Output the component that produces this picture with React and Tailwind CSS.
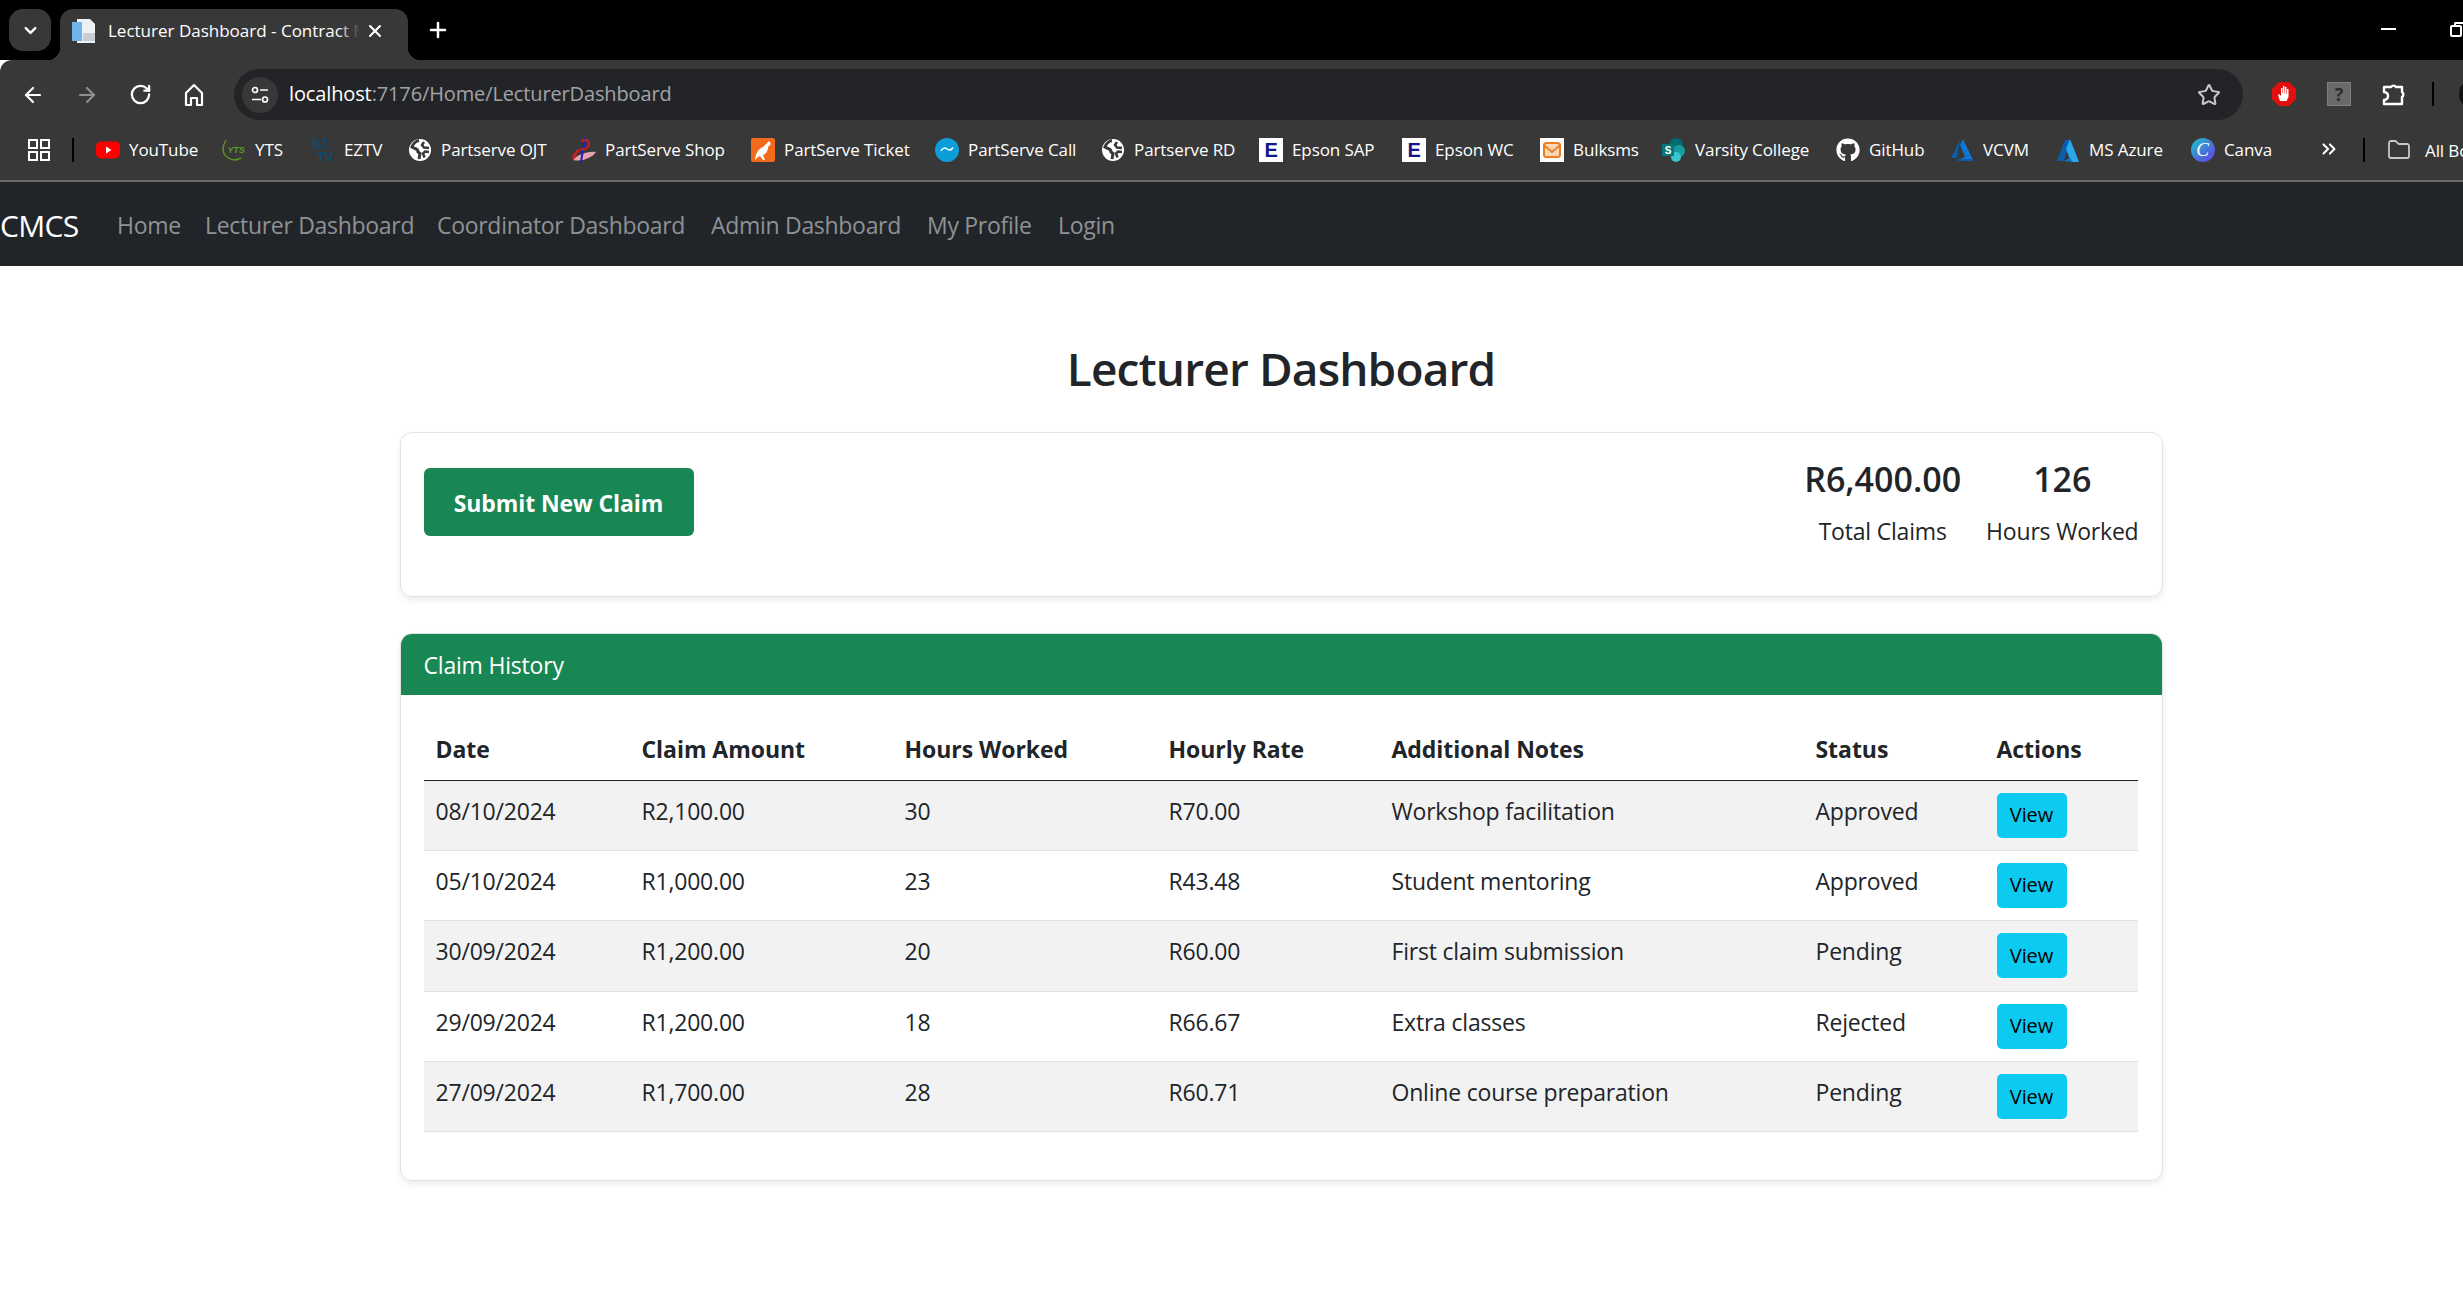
import { ArrowLeft, ArrowRight, RotateCw, Star, ChevronDown, ChevronsRight, Plus, X, Folder } from 'lucide-react';
import { FaGithub } from 'react-icons/fa';

function Globe() {
  return (
    <svg viewBox="0 0 24 24" className="w-6 h-6">
      <circle cx="12" cy="12" r="11" fill="#fff" />
      <path d="M11 2.500C8 3 5 6 4 9l3 1.500c2 .5 3 2 3 3.500l2 1.500-1 5.500" fill="none" stroke="#383838" strokeWidth="3" />
      <path d="M16 4l-2 3 2 2.500 5 .5M21 14l-4-.5-2 2 1.500 4" fill="none" stroke="#383838" strokeWidth="2.500" />
    </svg>
  );
}

function EpsonIcon() {
  return (
    <div className="w-6 h-6 bg-white flex items-center justify-center">
      <svg viewBox="0 0 24 24" className="w-6 h-6"><text x="12" y="19" textAnchor="middle" fontSize="20" fontWeight="800" fill="#10188c" fontFamily="Liberation Sans">E</text></svg>
    </div>
  );
}

const bookmarks = [
  { label: 'YouTube', width: 'w-[126px]', icon: <svg viewBox="0 0 24 24" className="w-6 h-6"><rect y="3.500" width="24" height="17" rx="5" fill="#f00" /><path d="M10 8.500l5.500 3.500-5.500 3.500z" fill="#fff" /></svg> },
  { label: 'YTS', width: 'w-[89px]', icon: <svg viewBox="0 0 24 24" className="w-6 h-6"><path d="M4 2C0 9 0 15 5 19c4 3 9 4 14 1" fill="none" stroke="#5c8f22" strokeWidth="1.500" /><text x="14" y="15" textAnchor="middle" fontSize="9" fontStyle="italic" fontWeight="700" fill="#5c9c22" fontFamily="Liberation Sans">YTS</text></svg> },
  { label: 'EZTV', width: 'w-[97px]', icon: <svg viewBox="0 0 24 24" className="w-6 h-6 overflow-visible"><text x="1" y="10" fontSize="13" fontWeight="700" fill="#0d4a70" fontFamily="Liberation Sans">EZ</text><text x="6" y="23" fontSize="13" fontWeight="700" fill="#0d4a70" fontFamily="Liberation Sans">TV</text></svg> },
  { label: 'Partserve OJT', width: 'w-[164px]', icon: <Globe /> },
  { label: 'PartServe Shop', width: 'w-[179px]', icon: <svg viewBox="0 0 24 24" className="w-6 h-6"><path d="M1 22c4-5 14-9 23-8-4 6-14 10-23 8z" fill="#e9a2ae" /><path d="M13 0L9 24" stroke="#1f1fc8" strokeWidth="2" /><path d="M9 3c5-2 9 0 8 4s-5 5-9 4" fill="none" stroke="#c2202a" strokeWidth="2" /><path d="M1 21c1-3 3-7 6-9" fill="none" stroke="#c2202a" strokeWidth="3" /></svg> },
  { label: 'PartServe Ticket', width: 'w-[184px]', icon: <svg viewBox="0 0 24 24" className="w-6 h-6"><rect width="24" height="24" rx="2" fill="#f26a1b" /><path d="M4 22c1-7 3-11 8-13l6-6 2 3-3 3c0 4-2 7-5 8l2 5h-2l-3-4-2 1z" fill="#fff" /></svg> },
  { label: 'PartServe Call', width: 'w-[166px]', icon: <svg viewBox="0 0 24 24" className="w-6 h-6"><circle cx="12" cy="12" r="12" fill="#0b9ed9" /><path d="M6 13c2-3.500 4-3.500 6-2s4 1.500 6-1.500" fill="none" stroke="#fff" strokeWidth="1.500" /></svg> },
  { label: 'Partserve RD', width: 'w-[158px]', icon: <Globe /> },
  { label: 'Epson SAP', width: 'w-[143px]', icon: <EpsonIcon /> },
  { label: 'Epson WC', width: 'w-[138px]', icon: <EpsonIcon /> },
  { label: 'Bulksms', width: 'w-[122px]', icon: <div className="w-6 h-6 bg-white flex items-center justify-center"><svg viewBox="0 0 20 20" className="w-5 h-5"><rect x="2" y="3" width="16" height="14" rx="2.500" fill="#fbd9b8" stroke="#f07c1e" strokeWidth="2" /><path d="M3 6l7 6 7-6" fill="none" stroke="#f07c1e" strokeWidth="2" /></svg></div> },
  { label: 'Varsity College', width: 'w-[174px]', icon: <svg viewBox="0 0 24 24" className="w-6 h-6"><circle cx="14" cy="7" r="7" fill="#036c70" /><circle cx="17" cy="13" r="6" fill="#1a9ba1" /><circle cx="14" cy="19" r="5" fill="#37c6d0" /><rect y="6" width="12" height="12" fill="#03787c" /><text x="6" y="16" textAnchor="middle" fontSize="10" fontWeight="700" fill="#fff" fontFamily="Liberation Sans">S</text></svg> },
  { label: 'GitHub', width: 'w-[114px]', icon: <FaGithub className="w-6 h-6 text-white" /> },
  { label: 'VCVM', width: 'w-[106px]', icon: <svg viewBox="0 0 24 24" className="w-6 h-6"><path d="M13 1l10 21H8l7-3-5-12z" fill="#1176d2" /><path d="M10 2L1 20h6z" fill="#0a5cad" /><path d="M8 22h15" stroke="#0a5cad" strokeWidth="2" /></svg> },
  { label: 'MS Azure', width: 'w-[135px]', icon: <svg viewBox="0 0 24 24" className="w-6 h-6"><path d="M9 2L1 23h7L14 2z" fill="#0a5cad" /><path d="M14 1l9 23h-8l-5-13z" fill="#29a8ea" /><path d="M8 23l6-3 3 4z" fill="#0f78d4" /></svg> },
  { label: 'Canva', width: 'w-[100px]', icon: <svg viewBox="0 0 24 24" className="w-6 h-6"><defs><linearGradient id="canva" x1="0" y1="0" x2="1" y2="1"><stop offset="0" stopColor="#19c8c8" /><stop offset="1" stopColor="#6a35e8" /></linearGradient></defs><circle cx="12" cy="12" r="12" fill="url(#canva)" /><text x="11.500" y="18" textAnchor="middle" fontSize="19" fontStyle="italic" fill="#fff" fontFamily="Liberation Serif">C</text></svg> },
];

const navLinks = [
  { label: 'Home', width: 'w-[88px]' },
  { label: 'Lecturer Dashboard', width: 'w-[232px]' },
  { label: 'Coordinator Dashboard', width: 'w-[274px]' },
  { label: 'Admin Dashboard', width: 'w-[216px]' },
  { label: 'My Profile', width: 'w-[131px]' },
  { label: 'Login', width: 'w-[80px]' },
];

const claims = [
  ['08/10/2024', 'R2,100.00', '30', 'R70.00', 'Workshop facilitation', 'Approved'],
  ['05/10/2024', 'R1,000.00', '23', 'R43.48', 'Student mentoring', 'Approved'],
  ['30/09/2024', 'R1,200.00', '20', 'R60.00', 'First claim submission', 'Pending'],
  ['29/09/2024', 'R1,200.00', '18', 'R66.67', 'Extra classes', 'Rejected'],
  ['27/09/2024', 'R1,700.00', '28', 'R60.71', 'Online course preparation', 'Pending'],
];

const headers = ['Date', 'Claim Amount', 'Hours Worked', 'Hourly Rate', 'Additional Notes', 'Status', 'Actions'];
const colWidths = ['w-[206px]', 'w-[263px]', 'w-[264px]', 'w-[223px]', 'w-[424px]', 'w-[181px]', 'w-[153px]'];

function BrowserChrome() {
  return (
    <div className="text-white">
      {/* tab strip */}
      <div className="h-[60px] bg-black flex items-start pl-[9px] relative">
        <div className="w-[42px] h-[42px] mt-[9px] rounded-[14px] bg-[#383838] flex items-center justify-center">
          <ChevronDown size={19} strokeWidth={3} />
        </div>
        <div className="relative ml-[9px] w-[348px] h-[51px] mt-[9px] bg-[#383838] rounded-t-[13px] flex items-center pl-[12px] pb-[7px]">
          <svg viewBox="0 0 24 24" className="w-6 h-6 shrink-0">
            <path d="M5 0h13l5 5v19H5z" fill="#eef1f4" />
            <rect x="0" y="3" width="10" height="19" fill="#6fb3e8" />
            <rect x="11" y="14" width="12" height="8" fill="#c9ced4" />
          </svg>
          <span className="relative ml-[12px] w-[252px] overflow-hidden whitespace-nowrap text-[17px]">
            Lecturer Dashboard - Contract Monthly Claim System
            <span className="absolute right-0 top-0 bottom-0 w-[22px] bg-gradient-to-r from-transparent to-[#383838]"></span>
          </span>
          <X size={20} strokeWidth={2.5} className="ml-[5px]" />
          <span className="absolute right-[-13px] bottom-0 w-[13px] h-[13px] bg-[radial-gradient(circle_at_100%_0,#000_13px,#383838_13.500px)]"></span>
          <span className="absolute left-[-13px] bottom-0 w-[13px] h-[13px] bg-[radial-gradient(circle_at_0_0,#000_13px,#383838_13.500px)]"></span>
        </div>
        <Plus size={24} strokeWidth={2.5} className="ml-[18px] mt-[18px]" />
        <div className="absolute left-[2381px] top-[28px] w-[15px] h-[2px] bg-white"></div>
        <div className="absolute left-[2450px] top-[25px] w-[12px] h-[12px] border-2 border-white rounded-[2px]"></div>
        <div className="absolute left-[2454px] top-[22px] w-[9px] h-[3px] border-t-2 border-l-2 border-white rounded-tl-[2px]"></div>
      </div>

      {/* address bar */}
      <div className="h-[69px] bg-[#383838] flex items-center rounded-tl-[12px] relative">
        <div className="w-[234px] flex items-center pl-[21px] gap-[30px] shrink-0">
          <ArrowLeft size={24} strokeWidth={2.2} />
          <ArrowRight size={24} strokeWidth={2.2} className="text-[#8e8e8e]" />
          <RotateCw size={23} strokeWidth={2.4} />
          <svg viewBox="0 0 24 24" className="w-6 h-6"><path d="M4 22V10l8-8 8 8v12h-5v-7H9v7z" fill="none" stroke="#fff" strokeWidth="2.200" strokeLinejoin="round" /></svg>
        </div>
        <div className="w-[2009px] h-[51px] rounded-full bg-[#232427] flex items-center pl-[8px] pr-[22px]">
          <div className="w-9 h-9 rounded-full bg-[#383838] flex items-center justify-center shrink-0">
            <svg viewBox="0 0 20 20" className="w-5 h-5"><circle cx="5" cy="5" r="2.500" fill="none" stroke="#fff" strokeWidth="1.700" /><path d="M10 5h8M2 14.500h9" stroke="#fff" strokeWidth="1.700" /><circle cx="15" cy="14.500" r="2.500" fill="none" stroke="#fff" strokeWidth="1.700" /></svg>
          </div>
          <span className="ml-[11px] text-[20px] tracking-[-0.13px] text-[#a0a3a8] -mt-[1px]"><span className="text-white">localhost</span>:7176/Home/LecturerDashboard</span>
          <Star size={24} strokeWidth={2} className="ml-auto text-[#c7c7c7]" />
        </div>
        <svg viewBox="0 0 24 24" className="absolute left-[2272px] top-[22px] w-6 h-6">
          <path d="M7 0h10l7 7v10l-7 7H7l-7-7V7z" fill="#e30e0e" />
          <path d="M8 19l-2-6 1-1 2 2V6h1.500v5H11V4h1.500v7H13V5h1.500v7h.5V7h1.500v8l-2 4z" fill="#fff" />
        </svg>
        <div className="absolute left-[2327px] top-[22px] w-6 h-6 bg-[#6a6a6a] border border-[#808080] flex items-center justify-center text-[18px] font-bold text-[#2c2c2c] leading-none">?</div>
        <svg viewBox="0 0 24 24" className="absolute left-[2382px] top-[22px] w-6 h-6">
          <path d="M2 5h7a3 3 0 0 1 5 0h6v5a3 3 0 0 1 0 5v7H2v-4c3 0 4-2 4-4s-1-4-4-4z" fill="none" stroke="#fff" strokeWidth="2.400" strokeLinejoin="round" />
        </svg>
        <div className="absolute left-[2432px] top-[22px] w-[2px] h-6 bg-black"></div>
        <div className="absolute left-[2459px] top-[18px] w-8 h-8 rounded-full bg-[#111]"></div>
      </div>

      {/* bookmarks */}
      <div className="h-[53px] bg-[#383838] border-b-[2px] border-[#6b6b6b] flex items-start pt-[9px] text-[17px] tracking-[-0.1px] overflow-hidden relative">
        <svg viewBox="0 0 22 22" className="ml-[28px] w-[22px] h-[22px] mt-[1px] shrink-0"><path d="M1 1h8v8H1zM13 1h8v8h-8zM1 13h8v8H1zM13 13h8v8h-8z" fill="none" stroke="#fff" strokeWidth="2" /></svg>
        <div className="ml-[22px] w-[2px] h-6 bg-black shrink-0"></div>
        <div className="ml-[22px] flex shrink-0">
          {bookmarks.map((b) => (
            <div key={b.label} className={`${b.width} flex items-center gap-[9px] h-6 whitespace-nowrap`}>
              {b.icon}
              <span>{b.label}</span>
            </div>
          ))}
        </div>
        <ChevronsRight size={22} strokeWidth={2.2} className="ml-[27px] shrink-0" />
        <div className="ml-[23px] w-[2px] h-6 bg-black shrink-0"></div>
        <Folder size={24} strokeWidth={1.8} className="ml-[22px] shrink-0 text-[#c7c7c7]" />
        <span className="ml-[14px] whitespace-nowrap">All Bookmarks</span>
      </div>

      {/* app navbar */}
      <div className="h-[84px] bg-[#212529] flex items-center whitespace-nowrap pt-[3px]">
        <span className="w-[117px] text-[30px] tracking-[-0.7px]">CMCS</span>
        {navLinks.map((l) => (
          <span key={l.label} className={`${l.width} text-[23px] tracking-[-0.3px] text-[#8f9294]`}>{l.label}</span>
        ))}
      </div>
    </div>
  );
}

export default function App() {
  return (
    <div className="min-h-screen bg-white overflow-hidden font-['Open_Sans','Liberation_Sans',sans-serif] text-[#212529]">
      <BrowserChrome />
      <div className="ml-[399.5px] w-[1763px]">
        <h1 className="mt-[66px] text-center text-[46px] leading-[72px] font-semibold tracking-[-0.85px]">Lecturer Dashboard</h1>
        <div className="mt-[28px] h-[165px] border-[1.5px] border-[#e2e2e2] rounded-[12px] shadow-[0_3px_6px_rgba(0,0,0,0.075)] flex justify-between pl-[23px] pr-[23px]">
          <button className="mt-[35px] h-[68px] w-[270px] pt-[2px] rounded-[6px] bg-[#198754] text-white text-[23px] font-bold tracking-[-0.1px]">Submit New Claim</button>
          <div className="flex gap-[25px] pt-[23px]">
            <div className="text-center">
              <div className="text-[34px] leading-[46px] font-semibold">R6,400.00</div>
              <div className="mt-[11px] text-[23px] leading-[36px] tracking-[-0.2px]">Total Claims</div>
            </div>
            <div className="text-center">
              <div className="text-[34px] leading-[46px] font-semibold">126</div>
              <div className="mt-[11px] text-[23px] leading-[36px] tracking-[-0.2px]">Hours Worked</div>
            </div>
          </div>
        </div>
        <div className="mt-[36px] h-[548px] border-[1.5px] border-[#e2e2e2] rounded-[12px] shadow-[0_3px_6px_rgba(0,0,0,0.075)] overflow-hidden">
          <div className="h-[61px] pt-[2px] bg-[#198754] text-white text-[23px] tracking-[-0.2px] flex items-center pl-[23px]">Claim History</div>
          <table className="ml-[23px] mt-[24px] w-[1714px] table-fixed border-collapse text-[23px] tracking-[-0.2px]">
            <thead>
              <tr className="h-[61px] border-b-[1.5px] border-[#212529]">
                {headers.map((h, i) => (
                  <th key={h} className={`${colWidths[i]} px-[12px] text-left font-bold tracking-[-0.05px]`}>{h}</th>
                ))}
              </tr>
            </thead>
            <tbody>
              {claims.map((row, i) => (
                <tr key={row[0]} className={`h-[70.4px] border-b-[1.5px] border-[#dee2e6] ${i % 2 === 0 ? 'bg-[#f2f2f2]' : 'bg-white'}`}>
                  {row.map((cell, j) => (
                    <td key={j} className="px-[12px] pt-[12px] align-top leading-[36px]">{cell}</td>
                  ))}
                  <td className="px-[12px] pt-[12px] align-top">
                    <button className="w-[70px] h-[45px] rounded-[5px] bg-[#0dcaf0] text-black text-[20px] tracking-[-0.1px]">View</button>
                  </td>
                </tr>
              ))}
            </tbody>
          </table>
        </div>
      </div>
    </div>
  );
}
